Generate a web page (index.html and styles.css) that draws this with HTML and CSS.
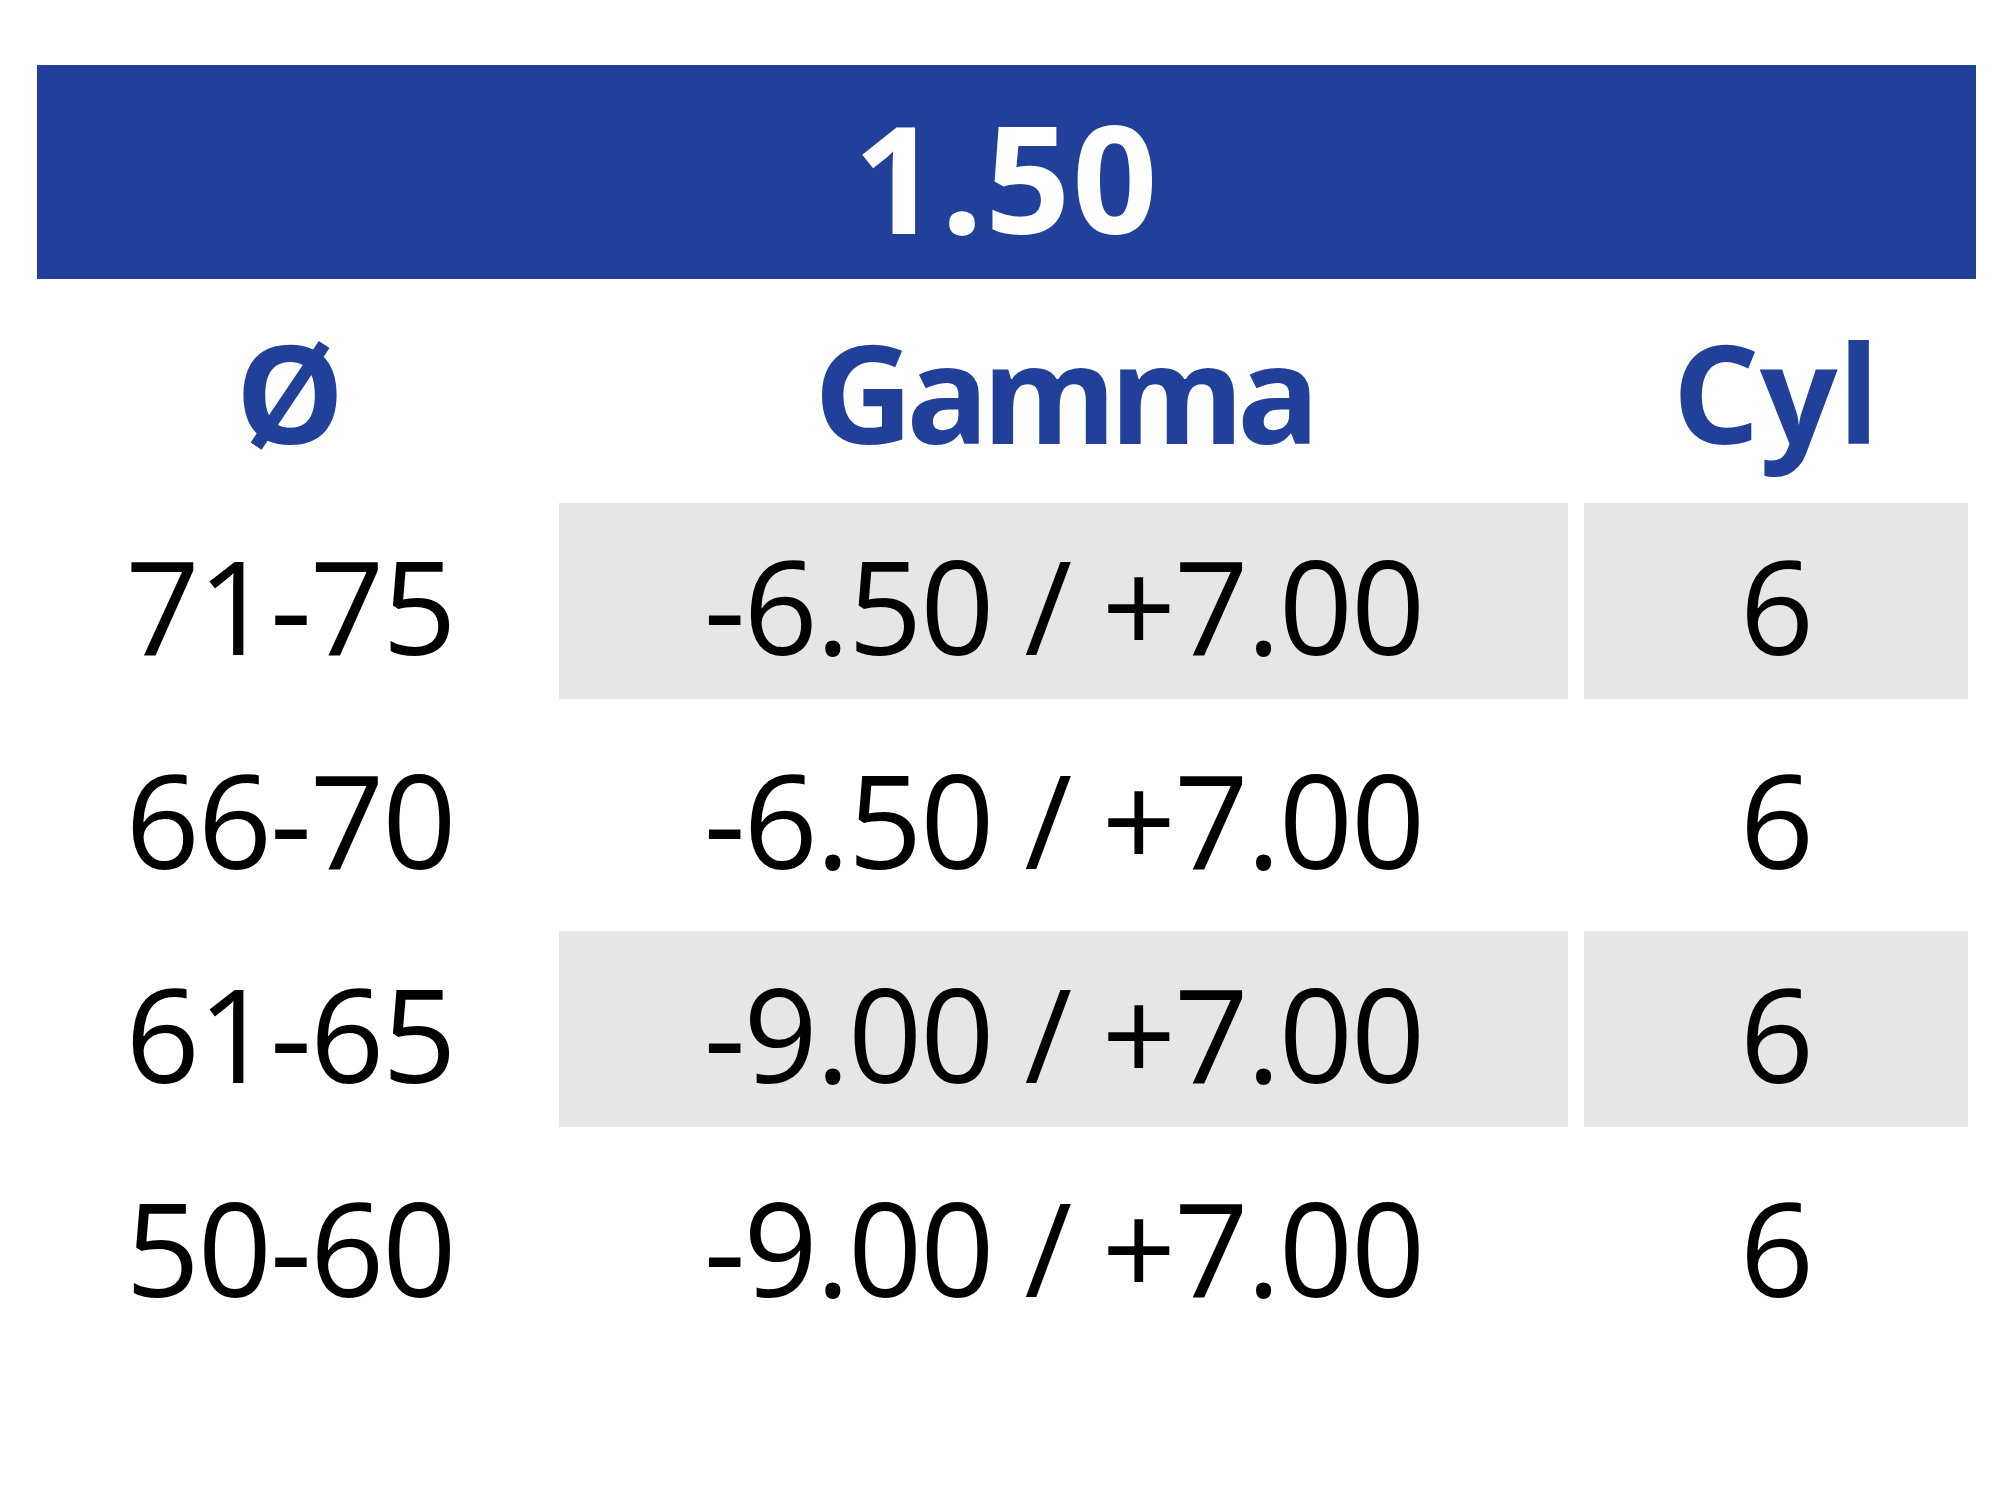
FILE: index.html
```html
<!DOCTYPE html>
<html lang="it">
<head>
<meta charset="utf-8">
<title>1.50</title>
<link rel="stylesheet" href="styles.css">
</head>
<body>
<main class="sheet">
  <div class="title"><span>1.50</span></div>
  <div class="grid">
    <div class="cell head">Ø</div>
    <div class="cell head tight">Gamma</div>
    <div class="cell head">Cyl</div>

    <div class="cell">71-75</div>
    <div class="cell shade">-6.50 / +7.00</div>
    <div class="cell shade">6</div>

    <div class="cell">66-70</div>
    <div class="cell">-6.50 / +7.00</div>
    <div class="cell">6</div>

    <div class="cell">61-65</div>
    <div class="cell shade">-9.00 / +7.00</div>
    <div class="cell shade">6</div>

    <div class="cell">50-60</div>
    <div class="cell">-9.00 / +7.00</div>
    <div class="cell">6</div>
  </div>
</main>
</body>
</html>
```

FILE: styles.css
```css
html, body {
  margin: 0;
  padding: 0;
  background: #ffffff;
}

.sheet {
  padding: 65px 0 0 37px;
  width: 1939px;
  font-family: "Open Sans", "Noto Sans", "Liberation Sans", sans-serif;
}

.title {
  height: 214px;
  background: #21409a;
  color: #ffffff;
  display: flex;
  align-items: center;
  justify-content: center;
  font-weight: 700;
  font-size: 149px;
  line-height: 1;
  letter-spacing: 2px;
}

.title span {
  padding-top: 8px;
}

.grid {
  margin-top: 10px;
  display: grid;
  grid-template-columns: 506px 1009px 384px;
  column-gap: 16px;
  row-gap: 18px;
}

.cell {
  height: 196px;
  display: flex;
  align-items: center;
  justify-content: center;
  color: #000000;
  font-size: 130px;
  font-weight: 400;
  line-height: 1;
  letter-spacing: -2px;
  padding-top: 8px;
  box-sizing: border-box;
}

.head {
  color: #21409a;
  font-weight: 700;
  font-size: 137px;
  letter-spacing: 0;
}

.tight {
  letter-spacing: -7px;
}

.shade {
  background: #e6e6e6;
}
```
